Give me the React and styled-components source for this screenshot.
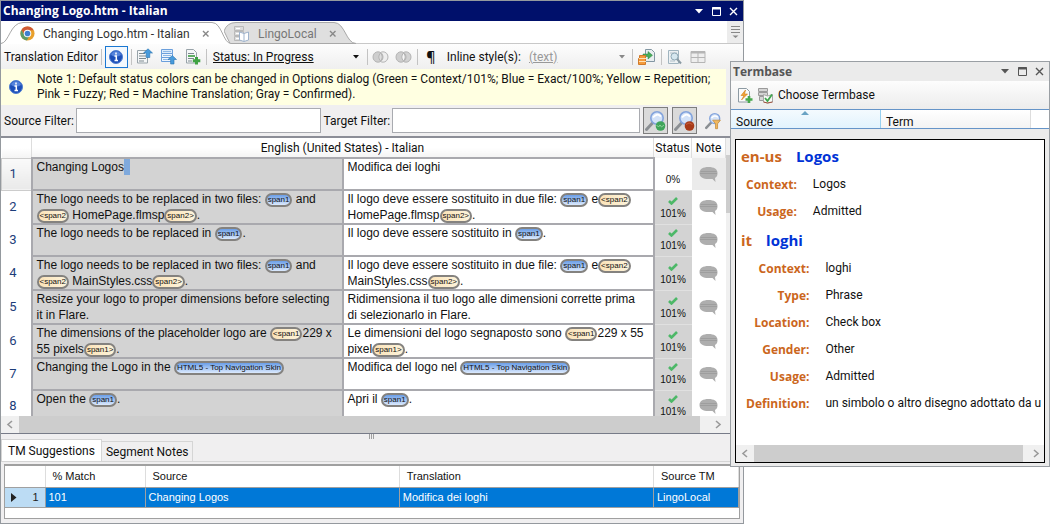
import React from "react";
import styled, { createGlobalStyle, css } from "styled-components";

const GlobalStyle = createGlobalStyle`
    * {
        box-sizing: border-box;
    }

    body {
        margin: 0;
        background: #fff;
        color: #111;
        font-family: Roboto, "Open Sans", sans-serif;
        font-size: 12px;
        line-height: 16px;
    }

    button, input, select {
        font: inherit;
        color: inherit;
        margin: 0;
    }

    svg {
        display: block;
        flex: none;
    }
`;

const Desktop = styled.main`
    position: relative;
    height: 100vh;
    min-height: 480px;
    overflow: hidden;
`;

/* ---------- editor window ---------- */

const EditorWindow = styled.section`
    display: flex;
    flex-direction: column;
    width: calc(100% - 306px);
    height: 100%;
    background: #f0eff0;
    border: 1px solid #94999e;
`;

const TitleBar = styled.header`
    display: flex;
    align-items: center;
    justify-content: space-between;
    height: 20px;
    flex: none;
    padding: 0 4px 0 2px;
    background: #00106b;
    color: #fff;
`;

const WindowTitle = styled.h1`
    margin: 0;
    font-family: "Open Sans", "Noto Sans", sans-serif;
    font-size: 12px;
    font-weight: 700;
    white-space: nowrap;
`;

const WindowButtons = styled.div`
    display: flex;
    gap: 5px;
`;

const IconButton = styled.button`
    display: flex;
    align-items: center;
    justify-content: center;
    width: ${(props) => props.$width || 20}px;
    height: ${(props) => props.$height || 20}px;
    flex: none;
    padding: 0;
    border: 1px solid ${(props) => (props.$active ? "#1a78d2" : "transparent")};
    background: ${(props) => (props.$active ? "#f3f8fd" : "transparent")};
`;

const GlyphButton = styled(IconButton)`
    font-family: "Open Sans", "Noto Sans", sans-serif;
    font-size: 14px;
    font-weight: 600;
`;

const TabStrip = styled.nav`
    display: flex;
    height: 23px;
    flex: none;
    background: #fff;
    border-bottom: 1px solid #c8c8c8;
`;

const DocTab = styled.div`
    position: relative;
    display: flex;
    align-items: center;
    gap: 6px;
    width: ${(props) => props.$width}px;
    height: 23px;
    padding: 2px 0 0 ${(props) => props.$inset}px;
    margin-right: -7px;
    color: ${(props) => (props.$active ? "#333" : "#777")};
    z-index: ${(props) => (props.$active ? 1 : 0)};
    white-space: nowrap;
`;

const TabShape = styled.svg`
    position: absolute;
    left: 0;
    top: 0;
    width: 100%;
    height: 100%;
    z-index: -1;
`;

const TabLabel = styled.button`
    display: flex;
    align-items: center;
    gap: ${(props) => props.$gap || 8}px;
    padding: 0;
    border: 0;
    background: none;
`;

const TabMenu = styled.button`
    display: flex;
    align-items: center;
    justify-content: center;
    width: 16px;
    height: 22px;
    margin-left: auto;
    padding: 0;
    border: 0;
    background: #ececec;
`;

const Toolbar = styled.div`
    display: flex;
    align-items: center;
    height: 25px;
    flex: none;
    padding: 0;
    background: linear-gradient(#fdfdfd, #efefef);
    white-space: nowrap;
`;

const ToolbarGroup = styled.div`
    display: flex;
    align-items: center;
    gap: ${(props) => props.$gap || 0}px;
    padding: 0 ${(props) => props.$pad || 3}px;
    border-left: ${(props) => (props.$first ? 0 : "1px solid #c3c3c3")};
    height: 16px;
`;

const Picker = styled.span`
    position: relative;
    display: flex;
    align-items: center;
    width: ${(props) => props.$width}px;
`;

const Select = styled.select`
    width: 100%;
    padding: 0;
    border: 0;
    appearance: none;
    background: none;
    text-decoration: underline;
    color: ${(props) => (props.$muted ? "#999" : "#111")};
`;

const PickerArrow = styled.svg`
    position: absolute;
    right: 2px;
    pointer-events: none;
`;

const Notice = styled.p`
    display: flex;
    align-items: center;
    gap: 14px;
    flex: none;
    height: 36px;
    margin: 0 17px 0 0;
    padding: 0 8px;
    background: #ffffe1;
    line-height: 15px;
    white-space: nowrap;
`;

const FilterBar = styled.form`
    display: flex;
    align-items: center;
    height: 31px;
    flex: none;
    padding: 0 17px 0 3px;
    white-space: nowrap;
`;

const FilterField = styled.label`
    display: flex;
    flex: 1;
    align-items: center;
    gap: 2px;
    margin-right: 3px;
`;

const FilterInput = styled.input`
    flex: 1;
    min-width: 0;
    height: 25px;
    border: 1px solid #a9abb0;
    background: #fff;
`;

const FilterToggle = styled.button`
    display: flex;
    align-items: center;
    justify-content: center;
    width: 25px;
    height: 27px;
    margin-right: 4px;
    padding: 0;
    border: 1px solid ${(props) => (props.$pressed ? "#7e7e7e" : "transparent")};
    background: ${(props) => (props.$pressed ? "#dadada" : "transparent")};

    &:last-child {
        margin-right: 0;
    }
`;

const SegmentArea = styled.div`
    display: flex;
    flex: 1;
    min-height: 0;
    border-top: 2px solid #8c8e97;
    background: #fff;
`;

const SegmentView = styled.div`
    flex: 1;
    min-width: 0;
    overflow: hidden;
`;

const SegmentTable = styled.table`
    width: 100%;
    table-layout: fixed;
    border-collapse: collapse;
    font-family: "Liberation Sans", Arial, sans-serif;

    th {
        height: 20px;
        padding: 0;
        font-family: Roboto, "Open Sans", sans-serif;
        font-weight: 400;
        background: linear-gradient(#fff 50%, #f4f4f4);
        border-right: 1px solid #ddd;
        white-space: nowrap;
    }
`;

const Col = styled.col`
    width: ${(props) => props.$width};
`;

const NumberCell = styled.td`
    height: 32px;
    padding: 0 6px 0 0;
    text-align: center;
    font-family: Roboto, "Open Sans", sans-serif;
    font-size: 13px;
    color: #1c3d7a;
    ${(props) =>
        props.$current &&
        css`
            background: linear-gradient(#fafafa, #e9e9e9);
            border: 1px solid #ccc;
        `}
`;

const TextCell = styled.td`
    padding: 0 8px 0 4px;
    vertical-align: top;
    border: 2px solid #a9a9ae;
    background: ${(props) => (props.$source ? "#d3d3d3" : "#fff")};
    line-height: 16px;
`;

const Caret = styled.mark`
    padding: 1px 3px;
    background: #7fa9dc;
`;

const Tag = styled.span`
    display: inline-block;
    height: 14px;
    padding: 0 1px;
    border: 2px solid #84827f;
    border-radius: 7px;
    font-size: 8px;
    line-height: 10px;
    vertical-align: middle;
    background: ${(props) =>
        props.$open
            ? "linear-gradient(90deg, #fbe3b8, #fdf3da)"
            : "linear-gradient(#6b9fe8, #dceafd)"};
`;

const StatusCell = styled.td`
    padding: 0 0 4px;
    font-size: 10px;
    line-height: 12px;
    text-align: center;
    vertical-align: bottom;
    background: ${(props) => (props.$done ? "#d3d3d3" : "#fff")};
    border-bottom: 1px solid #e0e0e0;

    svg {
        margin: 0 auto 3px;
    }
`;

const NoteCell = styled.td`
    padding: 0;
    background: ${(props) => (props.$current ? "#ebebeb" : "#fff")};

    svg {
        margin: 0 auto;
    }
`;

const VerticalScroll = styled.div`
    width: 17px;
    padding-top: 17px;
    background: #f0f0f0;
`;

const VerticalThumb = styled.div`
    height: 58px;
    background: #cdcdcd;
`;

const HorizontalScroll = styled.div`
    display: flex;
    align-items: center;
    height: 17px;
    flex: none;
    padding-right: ${(props) => props.$inset || 0}px;
    background: #f0f0f0;
    color: #999;
`;

const ScrollThumb = styled.div`
    flex: 1;
    height: 17px;
    margin-right: ${(props) => props.$space || 0}px;
    background: #cdcdcd;
`;

const Splitter = styled.div`
    display: flex;
    justify-content: center;
    height: 6px;
    flex: none;
    border-top: 1px solid #777b88;
`;

const PanelTabs = styled.nav`
    display: flex;
    align-items: flex-end;
    height: 22px;
    flex: none;
`;

const PanelTab = styled.button`
    height: ${(props) => (props.$active ? 22 : 20)}px;
    padding: 0 ${(props) => (props.$active ? 6 : 4)}px;
    border: 1px solid #d5d5d5;
    border-bottom: 0;
    border-left-width: ${(props) => (props.$active ? 1 : 0)}px;
    background: ${(props) => (props.$active ? "#fff" : "#f0eff0")};
`;

const SuggestionPanel = styled.div`
    flex: none;
    padding: 2px 3px 4px;
    border-top: 1px solid #d5d5d5;
`;

const SuggestionFrame = styled.div`
    height: 55px;
    border: 1px solid #a0a0a0;
    border-top-width: 2px;
    background: #fff;
`;

const SuggestionTable = styled.table`
    width: 100%;
    table-layout: fixed;
    border-collapse: collapse;
    font-family: "Liberation Sans", Arial, sans-serif;
    font-size: 11px;
    line-height: 14px;

    th {
        height: 21px;
        padding: 0 7px;
        border-right: 1px solid #ddd;
        border-bottom: 1px solid #a0a0a0;
        font-weight: 400;
        text-align: left;
    }

    td {
        height: 20px;
        padding: 0 3px;
        border-right: 1px solid #a0a0a0;
        border-bottom: 1px solid #a0a0a0;
        background: #0078d7;
        color: #fff;
    }
`;

const RowMarker = styled.div`
    display: flex;
    align-items: center;
    justify-content: space-between;
    padding: 0 3px;
`;

const MarkerCell = styled.td`
    && {
        background: #bcdcf4;
        color: #222;
    }
`;

/* ---------- termbase window ---------- */

const TermWindow = styled.aside`
    position: absolute;
    top: 61px;
    right: 0;
    width: 320px;
    border: 1px solid #9a9fa4;
    background: #ebebeb;
`;

const TermTitleBar = styled.header`
    display: flex;
    align-items: center;
    justify-content: space-between;
    height: 19px;
    padding: 0 4px 0 2px;
    color: #555;
`;

const TermToolbar = styled.div`
    display: flex;
    align-items: center;
    gap: 4px;
    height: 28px;
    padding: 0 6px;
    background: linear-gradient(#fdfdfd, #ececec);
`;

const TermColumns = styled.div`
    display: flex;
    height: 20px;
    overflow: hidden;
    border-top: 1px solid #6594c8;
    border-bottom: 1px solid #6594c8;
    background: #fff;
`;

const TermColumn = styled.button`
    position: relative;
    width: 150px;
    padding: 6px 5px 0;
    border: 0;
    border-right: 1px solid ${(props) => (props.$sorted ? "#96d0f0" : "#ddd")};
    line-height: 13px;
    text-align: left;
    background: ${(props) =>
        props.$sorted ? "linear-gradient(#f4fafe, #e2f3fd)" : "linear-gradient(#fff, #f3f3f3)"};
`;

const SortArrow = styled.svg`
    position: absolute;
    top: 1px;
    left: 70px;
`;

const TermDocument = styled.article`
    margin: 10px 4px 3px;
    border: 1px solid #000;
    background: #fff;
    overflow: hidden;
`;

const TermEntries = styled.div`
    height: 305px;
    padding: 1px 0 0 5px;
`;

const TermHeading = styled.h2`
    display: flex;
    gap: 14px;
    margin: 0;
    font-family: "Open Sans", "Noto Sans", sans-serif;
    font-size: 15px;
    line-height: 30px;
    color: #cb6620;
`;

const TermWord = styled.span`
    color: #0033d6;
`;

const TermFields = styled.dl`
    display: grid;
    grid-template-columns: max-content 1fr;
    column-gap: 16px;
    margin: 0 0 0 5px;
    line-height: 27px;
    white-space: nowrap;

    dt {
        font-family: "Open Sans", "Noto Sans", sans-serif;
        font-weight: 700;
        text-align: right;
        color: #cb6620;
    }

    dd {
        margin: 0;
    }
`;

/* ---------- icons ---------- */

const CloseIcon = ({ color = "currentColor" }) => (
    <svg width="9" height="9" viewBox="0 0 9 9" stroke={color} strokeWidth="1.4" fill="none">
        <path d="M1 1l7 7M8 1L1 8" />
    </svg>
);

const SmallCloseIcon = () => (
    <svg width="8" height="8" viewBox="0 0 8 8" stroke="#888" strokeWidth="1.4" fill="none">
        <path d="M1 1l5.500 5.500M6.500 1L1 6.500" />
    </svg>
);

const MaximizeIcon = () => (
    <svg width="9" height="9" viewBox="0 0 9 9" fill="none" stroke="currentColor">
        <path d="M.5 .5h8v8h-8z" />
        <path d="M0 1.5h9" strokeWidth="2" />
    </svg>
);

const DownIcon = ({ size = 8 }) => (
    <svg width={size} height={size / 2 + 1} viewBox="0 0 8 5" fill="currentColor">
        <path d="M0 0h8L4 4.5z" />
    </svg>
);

const Chevron = ({ right }) => (
    <svg width="18" height="9" viewBox="0 0 18 9" fill="none" stroke="currentColor" strokeWidth="1.6">
        <path d={right ? "M8 1l4 3.5L8 8" : "M11 1L7 4.5 11 8"} />
    </svg>
);

const BrowserIcon = () => (
    <svg width="15" height="15" viewBox="0 0 16 16">
        <circle cx="8" cy="8" r="7.5" fill="#e8a02c" />
        <path d="M1.5 4.2A7.5 7.5 0 0 1 14.6 4.5L8 4.6 4.8 9z" fill="#cf5a35" />
        <path d="M1.5 4.2A7.5 7.5 0 0 0 7.3 15.5L10.6 9.5 5 10z" fill="#5f9b67" />
        <circle cx="8" cy="8" r="4" fill="#fff" />
        <circle cx="8" cy="8" r="3" fill="#3f7fd0" />
    </svg>
);

const LocalIcon = () => (
    <svg width="17" height="16" viewBox="0 0 17 16" stroke="#b9b9b9">
        <path d="M1.500 .5h9v4h-9zM1.500 5.500h9v4h-9zM1.500 10.500h9v4h-9z" fill="#dcdcdc" />
        <path d="M3 2.500h4M3 7.500h3M3 12.500h3" stroke="#fff" />
        <path d="M6.500 6l4.500 1.500 4.500-1.500v8l-4.500 1.500-4.500-1.500z" fill="#fff" stroke="#9fb3cc" />
        <path d="M11 7.500v8" stroke="#9fb3cc" />
    </svg>
);

const InfoIcon = () => (
    <svg width="14" height="14" viewBox="0 0 14 14">
        <circle cx="7" cy="7" r="6.500" fill="#1d4fb8" stroke="#4f7ed2" />
        <path d="M2 5a5.200 5.200 0 0 1 10 0Q7 8 2 5z" fill="#5584dc" />
        <path d="M7 2.500v2M5.500 6H7.300v4.500M5.500 10.500h3.500" stroke="#fff" strokeWidth="1.500" fill="none" />
    </svg>
);

const PageIcon = ({ variant }) => (
    <svg width="17" height="17" viewBox="0 0 17 17">
        {variant === "top" && (
            <>
                <path d="M1.500 2.500h10v12.500h-10z" fill="#f5f7f8" stroke="#98a3a9" />
                <path d="M3 5.500h6M3 8h7M3 10.500h7M3 13h5" stroke="#7d898f" />
                <path d="M12 .8l4.500 4.200h-2.700v4.500h-3.600V5H7.500z" fill="#489bdc" stroke="#2a72ae" strokeWidth=".6" />
            </>
        )}
        {variant === "middle" && (
            <>
                <path d="M1.500 1.500h11v4h-11z" fill="#dcebfb" stroke="#6b9fdc" />
                <path d="M1.500 5.500h11v4h-11zM1.500 9.500h11v4h-11z" fill="#eef5fd" stroke="#6b9fdc" />
                <path d="M3 3.500h8M3 7.500h8M3 11.500h6" stroke="#8fb8e6" />
                <path d="M12.300 7.500l4.200 4h-2.500V16h-3.400v-4.500H8z" fill="#489bdc" stroke="#2a72ae" strokeWidth=".6" />
            </>
        )}
        {variant === "add" && (
            <>
                <path d="M2.500 1.500h7l3 3v10.500h-10z" fill="#f5f7f8" stroke="#98a3a9" />
                <path d="M4 5.500h6M4 10.500h6M4 13h4" stroke="#7d898f" />
                <path d="M4 8h7" stroke="#5fae63" strokeWidth="2" />
                <path d="M12.500 9v7.500M8.800 12.700h7.500" stroke="#3fa243" strokeWidth="3" />
            </>
        )}
    </svg>
);

const CirclesIcon = ({ merged }) => (
    <svg width="17" height="12" viewBox="0 0 17 12" stroke="#b4b4b4">
        <ellipse cx="11" cy="6" rx="5" ry="5.200" fill={merged ? "#d2d2d2" : "#eee"} />
        <ellipse cx="6" cy="6" rx="5" ry="5.200" fill="#cecece" />
        <path d="M8.500 2q-3.500 4 0 8 3.500-4 0-8z" fill={merged ? "#f5f5f5" : "#ddd"} />
    </svg>
);

const InsertIcon = () => (
    <svg width="18" height="17" viewBox="0 0 18 17">
        <path d="M7.500 1.500h6l3 3v9h-9z" fill="#e9eef0" stroke="#8296a2" />
        <path d="M5 6h5V3.500L14.500 7.300 10 11V8.500H5z" fill="#47ac5a" stroke="#2a8440" strokeWidth=".5" />
        <path d="M1.500 7.500h6v3h-6zM.5 10.500h7v3h-7zM.5 13.500h7v3h-7z" fill="#f49a3c" stroke="#d07a2a" />
        <path d="M1 10.500h7M1 13.500h7" stroke="#ffe2b8" />
    </svg>
);

const PreviewIcon = () => (
    <svg width="15" height="16" viewBox="0 0 15 16">
        <path d="M1.500 1.500h10v13h-10z" fill="#edf1f3" stroke="#a0b4bf" />
        <path d="M3 4h7M3 12h5" stroke="#b0bfc8" />
        <circle cx="7.500" cy="7.500" r="3.500" fill="#d6e7ef" stroke="#8fa9b6" />
        <path d="M10 10l4 4.500" stroke="#8a9aa3" strokeWidth="2" />
    </svg>
);

const GridIcon = () => (
    <svg width="16" height="14" viewBox="0 0 16 14" fill="#eee" stroke="#b5b5b5">
        <path d="M1 1.500h14v11H1zM1 7.500h14M8 3v9.500" />
        <path d="M1 2.500h14" strokeWidth="2" />
    </svg>
);

const LensIcon = ({ kind }) => (
    <svg width={kind === "funnel" ? 17 : 21} height={kind === "funnel" ? 18 : 22} viewBox="0 0 21 22">
        <path d="M1.500 19.500L7.500 13" stroke="#8b8f93" strokeWidth="3" strokeLinecap="round" />
        <circle cx="12" cy="8" r="6.200" fill="#d3e2f8" stroke="#84a4dc" strokeWidth="1.600" />
        <path d="M8 7.500q4-5 8-1" stroke="#fff" strokeWidth="1.800" fill="none" />
        {kind === "green" && (
            <>
                <circle cx="15.500" cy="16" r="4.800" fill="#3fa45a" />
                <path d="M11.500 15l2 2 1.500-2 1.500 2 2.500-2" stroke="#8ed29a" fill="none" />
            </>
        )}
        {kind === "red" && (
            <>
                <circle cx="15.500" cy="16" r="4.800" fill="#a83a18" />
                <path d="M12 14.500q3-3 6.500 0" stroke="#c8603c" fill="none" />
            </>
        )}
        {kind === "funnel" && <path d="M9.500 10h9.500l-3.500 4.500v6h-2.500v-6z" fill="#f0b860" stroke="#c79040" />}
    </svg>
);

const CheckIcon = () => (
    <svg width="10" height="8" viewBox="0 0 10 8" fill="none" stroke="#4db868" strokeWidth="2.6">
        <path d="M1 4l2.500 2.500L9 1" />
    </svg>
);

const BubbleIcon = () => (
    <svg width="19" height="17" viewBox="0 0 19 17">
        <path d="M9.500 1C4 1 .5 3 .5 7s3.500 6 9 6h4l3 3-.5-4c2-1 2.500-3 2.500-5 0-4-3.500-6-9-6z" fill="#aeaeae" />
        <path d="M1.500 5.500h16M1 7.500h17" stroke="#9e9e9e" />
    </svg>
);

const TermAddIcon = () => (
    <svg width="16" height="17" viewBox="0 0 16 17">
        <path d="M1.500 1.500h8l3 3v10.500h-11z" fill="#fafafa" stroke="#8d9aa3" />
        <path d="M8.500 3L4 8.500h3L4.500 13 10.500 7H7.500z" fill="#f3a536" stroke="#cf7a14" strokeWidth=".6" />
        <path d="M12 9v7M8.500 12.500h7" stroke="#47a84c" strokeWidth="2.6" />
    </svg>
);

const TermChooseIcon = () => (
    <svg width="17" height="17" viewBox="0 0 17 17">
        <path d="M1.500 1.500h9v3h-9zM1.500 5.500h9v3h-9zM2.500 9.500h7v4h-7z" fill="#d5d5d5" stroke="#9a9a9a" />
        <path d="M6.500 7.500l4 1.500 5-1.500v7.500l-5 1-4-1z" fill="#f6faf6" stroke="#a8a8a8" />
        <path d="M6.500 15l4 1 5-1" fill="none" stroke="#a3523e" />
        <path d="M8 11l2.500 3L15 7.500" fill="none" stroke="#3fa64d" strokeWidth="1.8" />
    </svg>
);

/* ---------- content ---------- */

const S1 = <Tag>span1</Tag>;
const S2Start = <Tag $open>&lt;span2</Tag>;
const S2End = <Tag $open>span2&gt;</Tag>;
const S1Start = <Tag $open>&lt;span1</Tag>;
const S1End = <Tag $open>span1&gt;</Tag>;
const Skin = <Tag>HTML5 - Top Navigation Skin</Tag>;

const segments = [
    {
        source: <>Changing Logos<Caret /></>,
        target: "Modifica dei loghi",
        match: "0%",
    },
    {
        source: <>The logo needs to be replaced in two files: {S1} and<br />{S2Start} HomePage.flmsp{S2End}.</>,
        target: <>Il logo deve essere sostituito in due file: {S1} e{S2Start}<br />HomePage.flmsp{S2End}.</>,
        match: "101%",
    },
    {
        source: <>The logo needs to be replaced in {S1}.</>,
        target: <>Il logo deve essere sostituito in {S1}.</>,
        match: "101%",
    },
    {
        source: <>The logo needs to be replaced in two files: {S1} and<br />{S2Start} MainStyles.css{S2End}.</>,
        target: <>Il logo deve essere sostituito in due file: {S1} e{S2Start}<br />MainStyles.css{S2End}.</>,
        match: "101%",
    },
    {
        source: "Resize your logo to proper dimensions before selecting it in Flare.",
        target: "Ridimensiona il tuo logo alle dimensioni corrette prima di selezionarlo in Flare.",
        match: "101%",
    },
    {
        source: <>The dimensions of the placeholder logo are {S1Start}229 x 55 pixels{S1End}.</>,
        target: <>Le dimensioni del logo segnaposto sono {S1Start}229 x 55 pixel{S1End}.</>,
        match: "101%",
    },
    {
        source: <>Changing the Logo in the {Skin}</>,
        target: <>Modifica del logo nel {Skin}</>,
        match: "101%",
    },
    {
        source: <>Open the {S1}.</>,
        target: <>Apri il {S1}.</>,
        match: "101%",
    },
];

const terms = [
    {
        lang: "en-us",
        word: "Logos",
        fields: [
            ["Context:", "Logos"],
            ["Usage:", "Admitted"],
        ],
    },
    {
        lang: "it",
        word: "loghi",
        fields: [
            ["Context:", "loghi"],
            ["Type:", "Phrase"],
            ["Location:", "Check box"],
            ["Gender:", "Other"],
            ["Usage:", "Admitted"],
            ["Definition:", "un simbolo o altro disegno adottato da u"],
        ],
    },
];

function EditorTabs() {
    return (
        <TabStrip>
            <DocTab $active $width={230} $inset={19}>
                <TabShape viewBox="0 0 230 23" preserveAspectRatio="none">
                    <path d="M0 22.500C8 22 9 1.500 22 1.500H211C221 1.500 222 22.500 230 22.500V23H0z" fill="#fff" />
                    <path d="M0 22.500C8 22 9 1.500 22 1.500H211C221 1.500 222 22.500 230 22.500" fill="none" stroke="#a8a8a8" />
                </TabShape>
                <TabLabel type="button"><BrowserIcon />Changing Logo.htm - Italian</TabLabel>
                <IconButton type="button" aria-label="Close tab"><SmallCloseIcon /></IconButton>
            </DocTab>
            <DocTab $width={132} $inset={9}>
                <TabShape viewBox="0 0 132 23" preserveAspectRatio="none">
                    <path d="M0 10Q3 1.500 12 1.500H110C121 1.500 122 22.500 132 22.500H6z" fill="#dfdfdf" stroke="#a8a8a8" />
                </TabShape>
                <TabLabel type="button"><LocalIcon />LingoLocal</TabLabel>
                <IconButton type="button" aria-label="Close tab"><SmallCloseIcon /></IconButton>
            </DocTab>
            <TabMenu type="button" aria-label="Open documents">
                <svg width="9" height="13" viewBox="0 0 9 13" stroke="#888" fill="#888">
                    <path d="M0 .5h9M0 3.500h9M0 6.500h9" />
                    <path d="M1.500 9.500h6l-3 2.500z" stroke="none" />
                </svg>
            </TabMenu>
        </TabStrip>
    );
}

function EditorToolbar() {
    return (
        <Toolbar>
            <ToolbarGroup $first>Translation Editor</ToolbarGroup>
            <ToolbarGroup>
                <IconButton $active $width={23} $height={22} type="button" aria-label="Show notes"><InfoIcon /></IconButton>
            </ToolbarGroup>
            <ToolbarGroup $gap={4}>
                <IconButton type="button" aria-label="Previous segment"><PageIcon variant="top" /></IconButton>
                <IconButton type="button" aria-label="Next segment"><PageIcon variant="middle" /></IconButton>
                <IconButton type="button" aria-label="Add segment"><PageIcon variant="add" /></IconButton>
            </ToolbarGroup>
            <ToolbarGroup $pad={6}>
                <Picker $width={148}>
                    <Select aria-label="Status"><option>Status: In Progress</option></Select>
                    <PickerArrow width="6" height="4" viewBox="0 0 6 4"><path d="M0 0h6L3 3.500z" fill="#111" /></PickerArrow>
                </Picker>
            </ToolbarGroup>
            <ToolbarGroup $gap={3}>
                <IconButton type="button" aria-label="Split"><CirclesIcon /></IconButton>
                <IconButton type="button" aria-label="Merge"><CirclesIcon merged /></IconButton>
            </ToolbarGroup>
            <ToolbarGroup $gap={8} $pad={5}>
                <GlyphButton $width={16} type="button" aria-label="Show marks">¶</GlyphButton>
                <span>Inline style(s):</span>
                <Picker $width={98}>
                    <Select $muted aria-label="Inline styles"><option>(text)</option></Select>
                    <PickerArrow width="6" height="4" viewBox="0 0 6 4"><path d="M0 0h6L3 3.500z" fill="#888" /></PickerArrow>
                </Picker>
            </ToolbarGroup>
            <ToolbarGroup>
                <IconButton $width={22} type="button" aria-label="Insert"><InsertIcon /></IconButton>
            </ToolbarGroup>
            <ToolbarGroup $gap={3}>
                <IconButton type="button" aria-label="Preview"><PreviewIcon /></IconButton>
                <IconButton type="button" aria-label="Grid"><GridIcon /></IconButton>
            </ToolbarGroup>
        </Toolbar>
    );
}

function Segments() {
    return (
        <SegmentArea>
            <SegmentView>
                <SegmentTable>
                    <colgroup>
                        <Col $width="30px" />
                        <Col />
                        <Col />
                        <Col $width="38px" />
                        <Col $width="34px" />
                    </colgroup>
                    <thead>
                        <tr>
                            <th />
                            <th colSpan={2}>English (United States) - Italian</th>
                            <th>Status</th>
                            <th>Note</th>
                        </tr>
                    </thead>
                    <tbody>
                        {segments.map((segment, index) => (
                            <tr key={index}>
                                <NumberCell $current={index === 0}>{index + 1}</NumberCell>
                                <TextCell $source>{segment.source}</TextCell>
                                <TextCell>{segment.target}</TextCell>
                                <StatusCell $done={index > 0}>
                                    {index > 0 && <CheckIcon />}
                                    {segment.match}
                                </StatusCell>
                                <NoteCell $current={index === 0}><BubbleIcon /></NoteCell>
                            </tr>
                        ))}
                    </tbody>
                </SegmentTable>
            </SegmentView>
            <VerticalScroll><VerticalThumb /></VerticalScroll>
        </SegmentArea>
    );
}

function Suggestions() {
    return (
        <>
            <PanelTabs>
                <PanelTab $active type="button">TM Suggestions</PanelTab>
                <PanelTab type="button">Segment Notes</PanelTab>
            </PanelTabs>
            <SuggestionPanel>
                <SuggestionFrame>
                    <SuggestionTable>
                        <colgroup>
                            <Col $width="40px" />
                            <Col $width="100px" />
                            <Col />
                            <Col />
                            <Col $width="85px" />
                        </colgroup>
                        <thead>
                            <tr>
                                <th />
                                <th>% Match</th>
                                <th>Source</th>
                                <th>Translation</th>
                                <th>Source TM</th>
                            </tr>
                        </thead>
                        <tbody>
                            <tr>
                                <MarkerCell>
                                    <RowMarker>
                                        <svg width="6" height="9" viewBox="0 0 6 9"><path d="M0 0l5.500 4.500L0 9z" fill="#222" /></svg>
                                        1
                                    </RowMarker>
                                </MarkerCell>
                                <td>101</td>
                                <td>Changing Logos</td>
                                <td>Modifica dei loghi</td>
                                <td>LingoLocal</td>
                            </tr>
                        </tbody>
                    </SuggestionTable>
                </SuggestionFrame>
            </SuggestionPanel>
        </>
    );
}

function Termbase() {
    return (
        <TermWindow>
            <TermTitleBar>
                <WindowTitle as="h2">Termbase</WindowTitle>
                <WindowButtons>
                    <IconButton $width={12} type="button" aria-label="Menu"><DownIcon /></IconButton>
                    <IconButton $width={12} type="button" aria-label="Maximize"><MaximizeIcon /></IconButton>
                    <IconButton $width={12} type="button" aria-label="Close"><CloseIcon /></IconButton>
                </WindowButtons>
            </TermTitleBar>
            <TermToolbar>
                <IconButton $width={16} type="button" aria-label="Add term"><TermAddIcon /></IconButton>
                <TabLabel $gap={4} type="button"><TermChooseIcon />Choose Termbase</TabLabel>
            </TermToolbar>
            <TermColumns>
                <TermColumn $sorted type="button">
                    Source
                    <SortArrow width="8" height="4" viewBox="0 0 8 4"><path d="M4 0l4 4H0z" fill="#6aa3c4" /></SortArrow>
                </TermColumn>
                <TermColumn type="button">Term</TermColumn>
            </TermColumns>
            <TermDocument>
                <TermEntries>
                    {terms.map((term) => (
                        <React.Fragment key={term.lang}>
                            <TermHeading>{term.lang}<TermWord>{term.word}</TermWord></TermHeading>
                            <TermFields>
                                {term.fields.map(([name, value]) => (
                                    <React.Fragment key={name}>
                                        <dt>{name}</dt>
                                        <dd>{value}</dd>
                                    </React.Fragment>
                                ))}
                            </TermFields>
                        </React.Fragment>
                    ))}
                </TermEntries>
                <HorizontalScroll>
                    <Chevron />
                    <ScrollThumb $space={3} />
                    <Chevron right />
                </HorizontalScroll>
            </TermDocument>
        </TermWindow>
    );
}

export default function App() {
    return (
        <>
            <GlobalStyle />
            <Desktop>
                <EditorWindow>
                    <TitleBar>
                        <WindowTitle>Changing Logo.htm - Italian</WindowTitle>
                        <WindowButtons>
                            <IconButton $width={12} type="button" aria-label="Menu"><DownIcon /></IconButton>
                            <IconButton $width={12} type="button" aria-label="Maximize"><MaximizeIcon /></IconButton>
                            <IconButton $width={12} type="button" aria-label="Close"><CloseIcon /></IconButton>
                        </WindowButtons>
                    </TitleBar>
                    <EditorTabs />
                    <EditorToolbar />
                    <Notice>
                        <InfoIcon />
                        <span>
                            Note 1: Default status colors can be changed in Options dialog (Green = Context/101%; Blue = Exact/100%; Yellow = Repetition;
                            <br />
                            Pink = Fuzzy; Red = Machine Translation; Gray = Confirmed).
                        </span>
                    </Notice>
                    <FilterBar>
                        <FilterField>Source Filter:<FilterInput type="text" /></FilterField>
                        <FilterField>Target Filter:<FilterInput type="text" /></FilterField>
                        <FilterToggle $pressed type="button" aria-label="Show matches"><LensIcon kind="green" /></FilterToggle>
                        <FilterToggle $pressed type="button" aria-label="Hide matches"><LensIcon kind="red" /></FilterToggle>
                        <FilterToggle type="button" aria-label="Filter"><LensIcon kind="funnel" /></FilterToggle>
                    </FilterBar>
                    <Segments />
                    <HorizontalScroll $inset={17}>
                        <Chevron />
                        <ScrollThumb $space={8} />
                        <Chevron right />
                    </HorizontalScroll>
                    <Splitter>
                        <svg width="6" height="5" viewBox="0 0 6 5"><path d="M.5 0v5M2.500 0v5M4.500 0v5" stroke="#a0a0a0" /></svg>
                    </Splitter>
                    <Suggestions />
                </EditorWindow>
                <Termbase />
            </Desktop>
        </>
    );
}
